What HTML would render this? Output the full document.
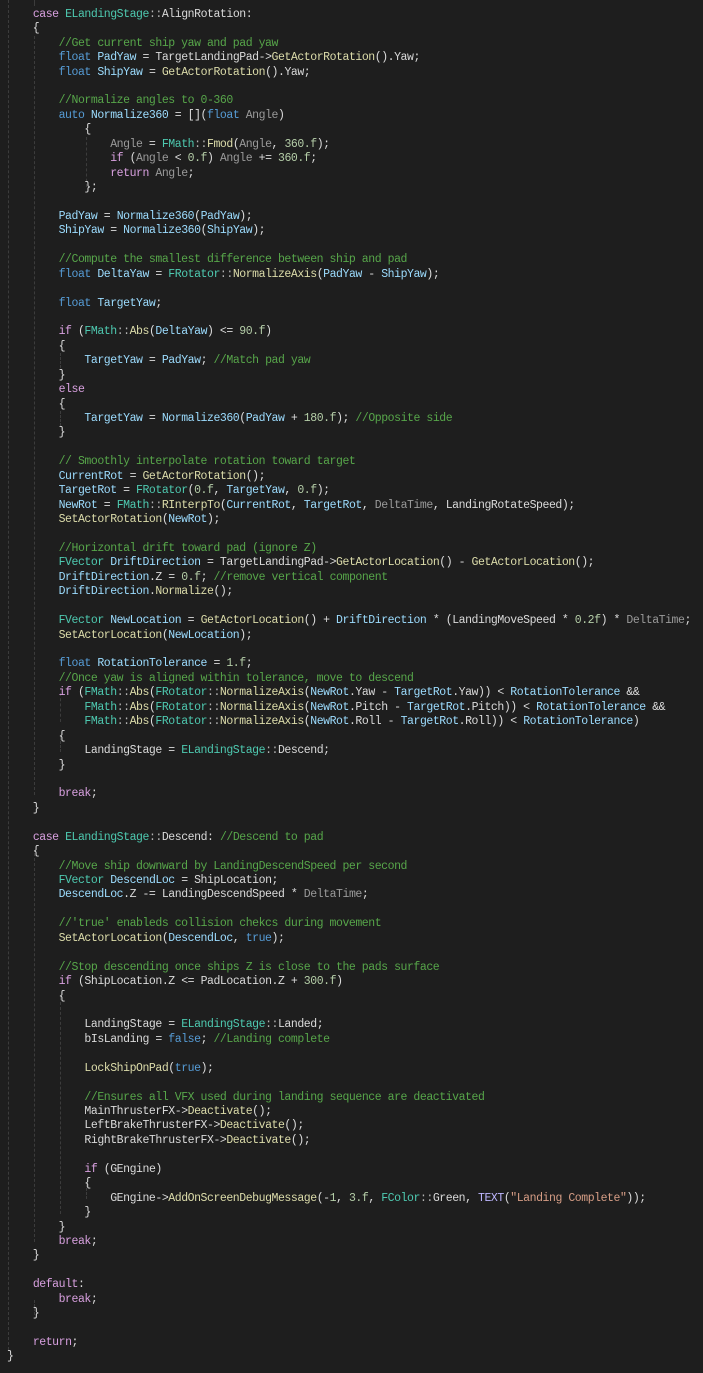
<!DOCTYPE html>
<html><head><meta charset="utf-8">
<style>
html,body{margin:0;padding:0;background:#1e1e1e;}
body{width:703px;height:1373px;overflow:hidden;position:relative;}
#code{position:absolute;left:7px;top:7.8px;font-family:"Liberation Mono",monospace;font-size:11.5px;letter-spacing:-0.45px;color:#dcdcdc;}
#code div{height:14.44px;line-height:14.44px;white-space:pre;}
.k{color:#569cd6}.c{color:#d8a0df}.t{color:#4ec9b0}.f{color:#dcdcaa}.v{color:#9cdcfe}.m{color:#dadada}
.p{color:#9a9a9a}.n{color:#b5cea8}.s{color:#d69d85}.cm{color:#57a64a}.mac{color:#beb7ff}.o{color:#b4b4b4}
.g{position:absolute;width:0;border-left:1px dashed #3c3c3c;}
</style></head><body>
<div class="g" style="left:8px;top:0;height:1350px"></div>
<div class="g" style="left:34px;top:0;height:6px"></div>
<div class="g" style="left:34px;top:36px;height:759px"></div>
<div class="g" style="left:34px;top:853px;height:389px"></div>
<div class="g" style="left:34px;top:1300px;height:15px"></div>
<div class="g" style="left:86px;top:137px;height:50px"></div>
<div class="g" style="left:60px;top:353px;height:15px"></div>
<div class="g" style="left:60px;top:411px;height:15px"></div>
<div class="g" style="left:60px;top:693px;height:29px"></div>
<div class="g" style="left:60px;top:737px;height:15px"></div>
<div class="g" style="left:60px;top:997px;height:217px"></div>
<div class="g" style="left:86px;top:1184px;height:15px"></div>
<div id="code"><div>    <span class="c">case</span> <span class="t">ELandingStage</span><span class="o">::</span><span class="m">AlignRotation</span>:</div><div>    {</div><div>        <span class="cm">//Get current ship yaw and pad yaw</span></div><div>        <span class="k">float</span> <span class="v">PadYaw</span> = <span class="m">TargetLandingPad</span>-&gt;<span class="f">GetActorRotation</span>().<span class="m">Yaw</span>;</div><div>        <span class="k">float</span> <span class="v">ShipYaw</span> = <span class="f">GetActorRotation</span>().<span class="m">Yaw</span>;</div><div> </div><div>        <span class="cm">//Normalize angles to 0-360</span></div><div>        <span class="k">auto</span> <span class="v">Normalize360</span> = [](<span class="k">float</span> <span class="p">Angle</span>)</div><div>            {</div><div>                <span class="p">Angle</span> = <span class="t">FMath</span><span class="o">::</span><span class="f">Fmod</span>(<span class="p">Angle</span>, <span class="n">360.f</span>);</div><div>                <span class="c">if</span> (<span class="p">Angle</span> &lt; <span class="n">0.f</span>) <span class="p">Angle</span> += <span class="n">360.f</span>;</div><div>                <span class="c">return</span> <span class="p">Angle</span>;</div><div>            };</div><div> </div><div>        <span class="v">PadYaw</span> = <span class="v">Normalize360</span>(<span class="v">PadYaw</span>);</div><div>        <span class="v">ShipYaw</span> = <span class="v">Normalize360</span>(<span class="v">ShipYaw</span>);</div><div> </div><div>        <span class="cm">//Compute the smallest difference between ship and pad</span></div><div>        <span class="k">float</span> <span class="v">DeltaYaw</span> = <span class="t">FRotator</span><span class="o">::</span><span class="f">NormalizeAxis</span>(<span class="v">PadYaw</span> - <span class="v">ShipYaw</span>);</div><div> </div><div>        <span class="k">float</span> <span class="v">TargetYaw</span>;</div><div> </div><div>        <span class="c">if</span> (<span class="t">FMath</span><span class="o">::</span><span class="f">Abs</span>(<span class="v">DeltaYaw</span>) &lt;= <span class="n">90.f</span>)</div><div>        {</div><div>            <span class="v">TargetYaw</span> = <span class="v">PadYaw</span>; <span class="cm">//Match pad yaw</span></div><div>        }</div><div>        <span class="c">else</span></div><div>        {</div><div>            <span class="v">TargetYaw</span> = <span class="v">Normalize360</span>(<span class="v">PadYaw</span> + <span class="n">180.f</span>); <span class="cm">//Opposite side</span></div><div>        }</div><div> </div><div>        <span class="cm">// Smoothly interpolate rotation toward target</span></div><div>        <span class="v">CurrentRot</span> = <span class="f">GetActorRotation</span>();</div><div>        <span class="v">TargetRot</span> = <span class="t">FRotator</span>(<span class="n">0.f</span>, <span class="v">TargetYaw</span>, <span class="n">0.f</span>);</div><div>        <span class="v">NewRot</span> = <span class="t">FMath</span><span class="o">::</span><span class="f">RInterpTo</span>(<span class="v">CurrentRot</span>, <span class="v">TargetRot</span>, <span class="p">DeltaTime</span>, <span class="m">LandingRotateSpeed</span>);</div><div>        <span class="f">SetActorRotation</span>(<span class="v">NewRot</span>);</div><div> </div><div>        <span class="cm">//Horizontal drift toward pad (ignore Z)</span></div><div>        <span class="t">FVector</span> <span class="v">DriftDirection</span> = <span class="m">TargetLandingPad</span>-&gt;<span class="f">GetActorLocation</span>() - <span class="f">GetActorLocation</span>();</div><div>        <span class="v">DriftDirection</span>.<span class="m">Z</span> = <span class="n">0.f</span>; <span class="cm">//remove vertical component</span></div><div>        <span class="v">DriftDirection</span>.<span class="f">Normalize</span>();</div><div> </div><div>        <span class="t">FVector</span> <span class="v">NewLocation</span> = <span class="f">GetActorLocation</span>() + <span class="v">DriftDirection</span> * (<span class="m">LandingMoveSpeed</span> * <span class="n">0.2f</span>) * <span class="p">DeltaTime</span>;</div><div>        <span class="f">SetActorLocation</span>(<span class="v">NewLocation</span>);</div><div> </div><div>        <span class="k">float</span> <span class="v">RotationTolerance</span> = <span class="n">1.f</span>;</div><div>        <span class="cm">//Once yaw is aligned within tolerance, move to descend</span></div><div>        <span class="c">if</span> (<span class="t">FMath</span><span class="o">::</span><span class="f">Abs</span>(<span class="t">FRotator</span><span class="o">::</span><span class="f">NormalizeAxis</span>(<span class="v">NewRot</span>.<span class="m">Yaw</span> - <span class="v">TargetRot</span>.<span class="m">Yaw</span>)) &lt; <span class="v">RotationTolerance</span> &amp;&amp;</div><div>            <span class="t">FMath</span><span class="o">::</span><span class="f">Abs</span>(<span class="t">FRotator</span><span class="o">::</span><span class="f">NormalizeAxis</span>(<span class="v">NewRot</span>.<span class="m">Pitch</span> - <span class="v">TargetRot</span>.<span class="m">Pitch</span>)) &lt; <span class="v">RotationTolerance</span> &amp;&amp;</div><div>            <span class="t">FMath</span><span class="o">::</span><span class="f">Abs</span>(<span class="t">FRotator</span><span class="o">::</span><span class="f">NormalizeAxis</span>(<span class="v">NewRot</span>.<span class="m">Roll</span> - <span class="v">TargetRot</span>.<span class="m">Roll</span>)) &lt; <span class="v">RotationTolerance</span>)</div><div>        {</div><div>            <span class="m">LandingStage</span> = <span class="t">ELandingStage</span><span class="o">::</span><span class="m">Descend</span>;</div><div>        }</div><div> </div><div>        <span class="c">break</span>;</div><div>    }</div><div> </div><div>    <span class="c">case</span> <span class="t">ELandingStage</span><span class="o">::</span><span class="m">Descend</span>: <span class="cm">//Descend to pad</span></div><div>    {</div><div>        <span class="cm">//Move ship downward by LandingDescendSpeed per second</span></div><div>        <span class="t">FVector</span> <span class="v">DescendLoc</span> = <span class="m">ShipLocation</span>;</div><div>        <span class="v">DescendLoc</span>.<span class="m">Z</span> -= <span class="m">LandingDescendSpeed</span> * <span class="p">DeltaTime</span>;</div><div> </div><div>        <span class="cm">//'true' enableds collision chekcs during movement</span></div><div>        <span class="f">SetActorLocation</span>(<span class="v">DescendLoc</span>, <span class="k">true</span>);</div><div> </div><div>        <span class="cm">//Stop descending once ships Z is close to the pads surface</span></div><div>        <span class="c">if</span> (<span class="m">ShipLocation</span>.<span class="m">Z</span> &lt;= <span class="m">PadLocation</span>.<span class="m">Z</span> + <span class="n">300.f</span>)</div><div>        {</div><div> </div><div>            <span class="m">LandingStage</span> = <span class="t">ELandingStage</span><span class="o">::</span><span class="m">Landed</span>;</div><div>            <span class="m">bIsLanding</span> = <span class="k">false</span>; <span class="cm">//Landing complete</span></div><div> </div><div>            <span class="f">LockShipOnPad</span>(<span class="k">true</span>);</div><div> </div><div>            <span class="cm">//Ensures all VFX used during landing sequence are deactivated</span></div><div>            <span class="m">MainThrusterFX</span>-&gt;<span class="f">Deactivate</span>();</div><div>            <span class="m">LeftBrakeThrusterFX</span>-&gt;<span class="f">Deactivate</span>();</div><div>            <span class="m">RightBrakeThrusterFX</span>-&gt;<span class="f">Deactivate</span>();</div><div> </div><div>            <span class="c">if</span> (<span class="m">GEngine</span>)</div><div>            {</div><div>                <span class="m">GEngine</span>-&gt;<span class="f">AddOnScreenDebugMessage</span>(-<span class="n">1</span>, <span class="n">3.f</span>, <span class="t">FColor</span><span class="o">::</span><span class="m">Green</span>, <span class="mac">TEXT</span>(<span class="s">"Landing Complete"</span>));</div><div>            }</div><div>        }</div><div>        <span class="c">break</span>;</div><div>    }</div><div> </div><div>    <span class="c">default</span>:</div><div>        <span class="c">break</span>;</div><div>    }</div><div> </div><div>    <span class="c">return</span>;</div><div>}</div></div>
</body></html>
